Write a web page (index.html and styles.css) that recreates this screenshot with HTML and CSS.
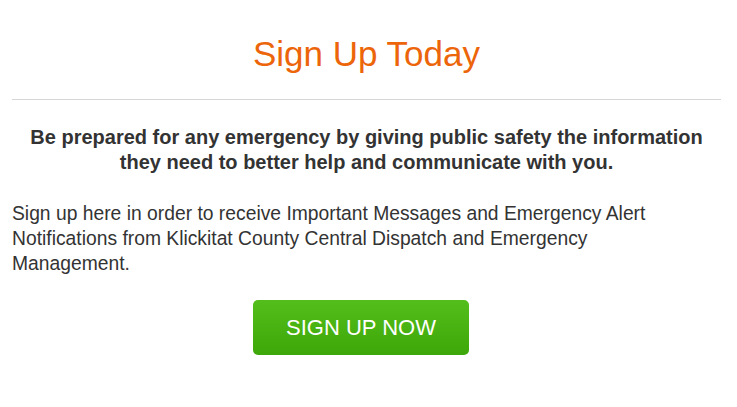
FILE: index.html
```html
<!DOCTYPE html>
<html>
<head>
<meta charset="utf-8">
<link rel="stylesheet" href="styles.css">
</head>
<body>
<div class="page">
  <h1 class="title">Sign Up Today</h1>
  <hr class="rule">
  <p class="lead">Be prepared for any emergency by giving public safety the information they need to better help and communicate with you.</p>
  <p class="body-text">Sign up here in order to receive Important Messages and Emergency Alert Notifications from Klickitat County Central Dispatch and Emergency Management.</p>
  <div class="cta-row">
    <a class="cta" href="#">SIGN UP NOW</a>
  </div>
</div>
</body>
</html>
```
FILE: styles.css
```css
html, body {
  margin: 0;
  padding: 0;
  background: #ffffff;
}
body {
  font-family: "Liberation Sans", Arial, sans-serif;
  color: #333333;
}
.page {
  padding: 34px 16px 0 12px;
}
.title {
  margin: 0;
  font-size: 35px;
  line-height: 40px;
  font-weight: normal;
  color: #ec650a;
  text-align: center;
}
.rule {
  margin: 25px 0 0 0;
  border: 0;
  border-top: 1px solid #d6d6d6;
  height: 0;
}
.lead {
  margin: 25px 0 0 0;
  font-size: 20px;
  line-height: 25px;
  font-weight: bold;
  text-align: center;
  color: #333333;
}
.body-text {
  margin: 26px 0 0 0;
  padding-right: 30px;
  font-size: 19.3px;
  line-height: 25px;
  color: #333333;
}
.cta-row {
  display: flex;
  justify-content: center;
  margin-top: 24px;
  padding-right: 11px;
}
.cta {
  display: flex;
  align-items: center;
  justify-content: center;
  width: 216px;
  height: 55px;
  border-radius: 5px;
  background: linear-gradient(to bottom, #53be1b, #3ea709);
  color: #ffffff;
  font-size: 22px;
  text-decoration: none;
}
```
